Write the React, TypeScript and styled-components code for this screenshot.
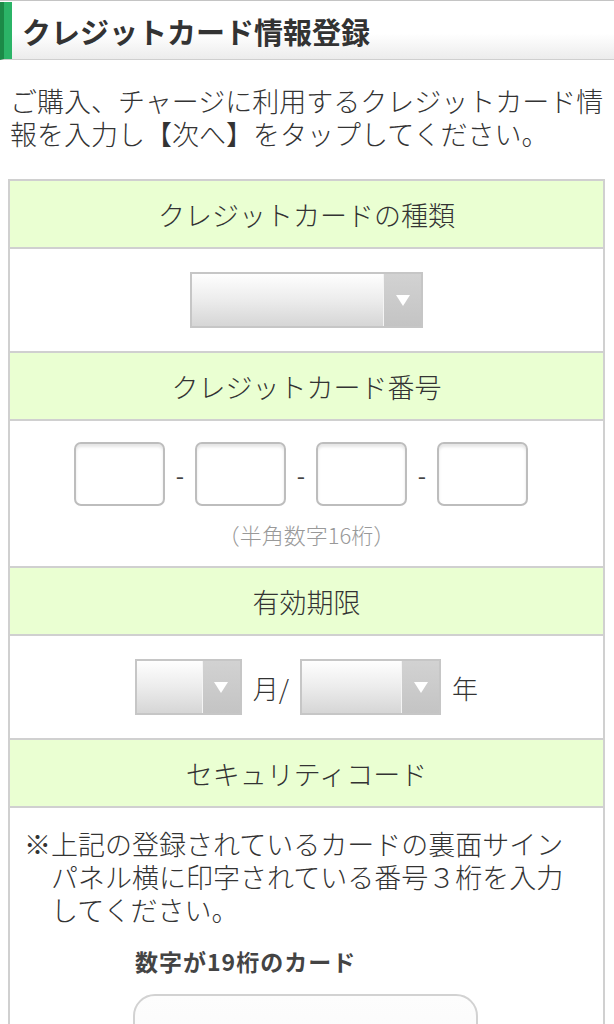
import React from 'react';
import styled, { createGlobalStyle } from 'styled-components';

const GlobalStyle = createGlobalStyle`
  *, *::before, *::after {
    box-sizing: border-box;
  }
  html, body {
    margin: 0;
    padding: 0;
    background: #fff;
  }
  body {
    font-family: "Noto Sans CJK JP", "Noto Sans", sans-serif;
    font-weight: 300;
    color: #333;
  }
`;

const Page = styled.div`
  width: 614px;
  padding-top: 1px;
  border-top: 1px solid #c4c4c4;
`;

const TitleBar = styled.div`
  display: flex;
  align-items: center;
  height: 58px;
  border-bottom: 1px solid #cfcfcf;
  background: linear-gradient(to bottom, #ffffff 0%, #ffffff 55%, #ececec 100%);
  border-left: 4px solid #1b8a47;
  box-shadow: inset 8px 0 0 #2bb467;
  padding-left: 18px;
`;

const Title = styled.h1`
  margin: 0;
  font-size: 29px;
  font-weight: 700;
  color: #333;
`;

const Intro = styled.p`
  margin: 0;
  padding: 24px 10px 29px;
  font-size: 27px;
  line-height: 33px;
  color: #333;
`;

const FormTable = styled.div`
  margin: 0 9px 0 8px;
  border: 2px solid #d0d0d0;
  border-bottom: none;
  display: flex;
  flex-direction: column;
`;

const SectionHead = styled.div`
  height: 68px;
  display: flex;
  align-items: center;
  justify-content: center;
  background: #eaffd2;
  border-bottom: 2px solid #d0d0d0;
  font-size: 27px;
  color: #333;
`;

const SectionBody = styled.div<{ $height: number }>`
  display: flex;
  flex-direction: column;
  align-items: center;
  justify-content: center;
  height: ${p => p.$height}px;
  border-bottom: 2px solid #d0d0d0;
  background: #fff;
`;

const NumberBody = styled.div`
  display: flex;
  flex-direction: column;
  align-items: center;
  height: 147px;
  padding: 21px 0 0;
  border-bottom: 2px solid #d0d0d0;
`;

const Row = styled.div<{ $shift?: number }>`
  display: flex;
  align-items: center;
  margin-right: ${p => p.$shift ?? 0}px;
`;

const SelectBox = styled.div<{ $width: number }>`
  width: ${p => p.$width}px;
  height: 56px;
  border: 2px solid #c6c6c6;
  display: flex;
  background: linear-gradient(to bottom, #fefefe 0%, #ececec 50%, #d6d6d6 100%);
`;

const SelectValue = styled.div`
  flex: 1;
  border-right: 1px solid #f4f4f4;
`;

const SelectArrow = styled.div`
  width: 37px;
  display: flex;
  align-items: center;
  justify-content: center;
  background: linear-gradient(to bottom, #d2d2d2 0%, #c4c4c4 100%);

  &::after {
    content: '';
    width: 0;
    height: 0;
    border-left: 7px solid transparent;
    border-right: 7px solid transparent;
    border-top: 11px solid #fff;
  }
`;

const CardInput = styled.div`
  width: 91px;
  height: 64px;
  border: 2px solid #bdbdbd;
  border-radius: 7px;
  background: #fff;
  box-shadow: inset 0 3px 3px rgba(0, 0, 0, 0.1);
`;

const Dash = styled.span`
  display: inline-block;
  width: 30px;
  text-align: center;
  font-size: 24px;
  font-weight: 400;
  color: #444;
`;

const Hint = styled.div`
  margin-top: 12px;
  font-size: 22px;
  color: #999;
`;

const Unit = styled.span<{ $gap: number }>`
  font-size: 26px;
  color: #333;
  margin: 0 ${p => p.$gap}px 0 11px;
`;

const SecurityBody = styled.div`
  border-bottom: 2px solid #d0d0d0;
  padding: 19px 28px 30px 14px;
`;

const Notice = styled.p`
  margin: 0;
  padding-left: 27px;
  text-indent: -27px;
  font-size: 27px;
  line-height: 33px;
  color: #333;
`;

const CardLabel = styled.div`
  margin: 18px 0 0 111px;
  font-size: 23px;
  font-weight: 700;
  color: #444;
  letter-spacing: 1px;
`;

const CardImage = styled.div`
  margin: 16px 0 0 109px;
  width: 345px;
  height: 190px;
  border: 2px solid #d2d2d2;
  border-radius: 22px;
  background: linear-gradient(to bottom, #fdfdfd, #f4f4f4);
`;

const Select: React.FC<{ width: number }> = ({ width }) => (
  <SelectBox $width={width}>
    <SelectValue />
    <SelectArrow />
  </SelectBox>
);

const App: React.FC = () => {
  return (
    <Page>
      <GlobalStyle />
      <TitleBar>
        <Title>クレジットカード情報登録</Title>
      </TitleBar>

      <Intro>ご購入、チャージに利用するクレジットカード情報を入力し【次へ】をタップしてください。</Intro>

      <FormTable>
        <SectionHead>クレジットカードの種類</SectionHead>
        <SectionBody $height={104}>
          <Select width={233} />
        </SectionBody>

        <SectionHead>クレジットカード番号</SectionHead>
        <NumberBody>
          <Row $shift={11}>
            <CardInput />
            <Dash>-</Dash>
            <CardInput />
            <Dash>-</Dash>
            <CardInput />
            <Dash>-</Dash>
            <CardInput />
          </Row>
          <Hint>（半角数字16桁）</Hint>
        </NumberBody>

        <SectionHead>有効期限</SectionHead>
        <SectionBody $height={104}>
          <Row>
            <Select width={107} />
            <Unit $gap={11}>月/</Unit>
            <Select width={141} />
            <Unit $gap={0}>年</Unit>
          </Row>
        </SectionBody>

        <SectionHead>セキュリティコード</SectionHead>
        <SecurityBody>
          <Notice>※上記の登録されているカードの裏面サインパネル横に印字されている番号３桁を入力してください。</Notice>
          <CardLabel>数字が19桁のカード</CardLabel>
          <CardImage />
        </SecurityBody>
      </FormTable>
    </Page>
  );
};

export default App;
